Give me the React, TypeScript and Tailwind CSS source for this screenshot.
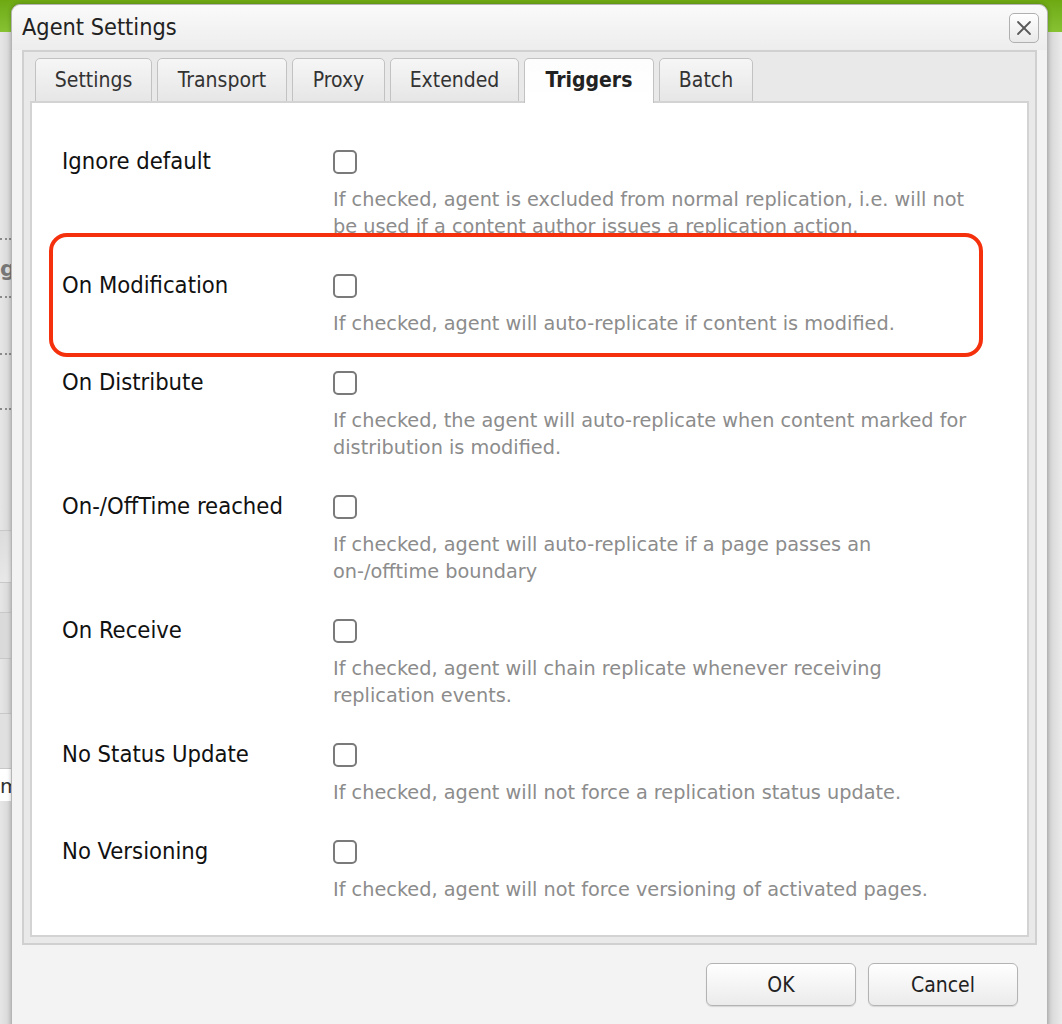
import { X } from 'lucide-react';

const TAHOMA = "font-['DejaVu_Sans_Condensed','DejaVu_Sans',sans-serif] [font-stretch:condensed]";
const VERDANA = "font-['DejaVu_Sans',sans-serif]";

const TABS = [
  { label: 'Settings', w: 'w-[117px]' },
  { label: 'Transport', w: 'w-[130px]' },
  { label: 'Proxy', w: 'w-[93px]' },
  { label: 'Extended', w: 'w-[129px]' },
  { label: 'Triggers', w: 'w-[130px]', active: true },
  { label: 'Batch', w: 'w-[94px]' },
];

const TRIGGERS = [
  {
    label: 'Ignore default',
    lines: [
      'If checked, agent is excluded from normal replication, i.e. will not',
      'be used if a content author issues a replication action.',
    ],
  },
  { label: 'On Modification', lines: ['If checked, agent will auto-replicate if content is modified.'] },
  {
    label: 'On Distribute',
    lines: ['If checked, the agent will auto-replicate when content marked for', 'distribution is modified.'],
  },
  {
    label: 'On-/OffTime reached',
    lines: ['If checked, agent will auto-replicate if a page passes an', 'on-/offtime boundary'],
  },
  {
    label: 'On Receive',
    lines: ['If checked, agent will chain replicate whenever receiving', 'replication events.'],
  },
  { label: 'No Status Update', lines: ['If checked, agent will not force a replication status update.'] },
  { label: 'No Versioning', lines: ['If checked, agent will not force versioning of activated pages.'] },
];

function TriggerRow({ label, lines }: { label: string; lines: string[] }) {
  return (
    <div className="flex pb-[34px]">
      <div className={`w-[271px] shrink-0 -mt-[3px] text-[23.6px] leading-[28px] text-[#111] ${TAHOMA}`}>{label}</div>
      <div className="flex flex-col">
        <div className="h-[24px] w-[24px] rounded-[5px] border-2 border-[#7a7a7a] bg-white" />
        <div className={`mt-[12px] text-[19.3px] leading-[27px] text-[#8c8c8c] ${VERDANA}`}>
          {lines.map(l => (
            <div key={l} className="whitespace-nowrap">
              {l}
            </div>
          ))}
        </div>
      </div>
    </div>
  );
}

function DialogButton({ children }: { children: string }) {
  return (
    <button
      className={`h-[43px] w-[150px] rounded-[6px] border border-[#b3b3b3] bg-gradient-to-b from-white to-[#ebebeb] pt-[3px] text-[21px] text-[#222] shadow-[0_1px_1px_rgba(0,0,0,0.12)] ${TAHOMA}`}
    >
      {children}
    </button>
  );
}

export default function App() {
  return (
    <div className="relative h-[1024px] w-[1062px] overflow-hidden bg-[#e4e4e4]">
      {/* page behind the dialog */}
      <div className="h-[32px] bg-gradient-to-b from-[#6ea912] to-[#86c232]" />
      <div className="flex justify-between">
        <div className="flex w-[11px] flex-col bg-gradient-to-r from-[#e6e6e6] to-[#d6d6d6]">
          <div className="h-[206px]" />
          <div className="h-[2px] border-t-2 border-dotted border-[#8a8a8a]" />
          <div className={`h-[56px] pt-[18px] text-[22px] font-bold leading-[22px] text-[#777] ${VERDANA}`}>g</div>
          <div className="h-[2px] border-t-2 border-dotted border-[#8a8a8a]" />
          <div className="h-[55px]" />
          <div className="h-[2px] border-t-2 border-dotted border-[#8a8a8a]" />
          <div className="h-[53px]" />
          <div className="h-[2px] border-t-2 border-dotted border-[#8a8a8a]" />
          <div className="h-[120px]" />
          <div className="h-[52px] border-t border-[#c8c8c8] bg-gradient-to-b from-[#dcdcdc] to-[#e8e8e8]" />
          <div className="h-[30px] border-t border-[#c8c8c8]" />
          <div className="h-[46px] border-t border-[#c8c8c8] bg-[#dadada]" />
          <div className="h-[55px] border-t border-[#c8c8c8]" />
          <div className="h-[55px] border-t border-[#c8c8c8] bg-[#e0e0e0]" />
          <div className={`border-t border-[#c8c8c8] bg-white pt-[2px] text-[20px] text-[#333] ${VERDANA}`}>m</div>
        </div>
        <div className="h-[992px] w-[15px] bg-gradient-to-r from-[#d2d2d2] to-[#ebebeb]" />
      </div>

      {/* dialog */}
      <div className="absolute left-[11px] top-[4px] flex h-[1040px] w-[1037px] flex-col rounded-t-[9px] border border-[#b5b5b5] bg-[#f3f3f3] shadow-[0_0_4px_rgba(0,0,0,0.25)]">
        <div className="flex h-[45px] items-center justify-between rounded-t-[9px] bg-gradient-to-b from-[#fafafa] to-[#ededed] pl-[10px] pr-[8px]">
          <span className={`text-[23.3px] text-[#222] ${TAHOMA}`}>Agent Settings</span>
          <button className="flex h-[30px] w-[30px] items-center justify-center rounded-[5px] border border-[#b0b0b0] bg-gradient-to-b from-white to-[#e9e9e9]">
            <X className="h-[24px] w-[24px] text-[#5a5a5a]" strokeWidth={1.8} />
          </button>
        </div>

        <div className="mx-[10px] flex flex-col border-2 border-[#d0d0d0] bg-[#e9e9e9] px-[6px] pb-[6px]">
          <div className="flex gap-[5px] pl-[5px] pt-[6px]">
            {TABS.map(t => (
              <div
                key={t.label}
                className={`relative -mb-[2px] flex h-[45px] items-center justify-center rounded-t-[5px] border border-[#c2c2c2] text-[21px] ${TAHOMA} ${t.w} ${
                  t.active
                    ? 'z-10 border-b-0 bg-gradient-to-b from-[#fdfdfd] to-white font-bold text-[#222]'
                    : 'bg-gradient-to-b from-[#f6f6f6] to-[#e6e6e6] text-[#333]'
                }`}
              >
                {t.label}
              </div>
            ))}
          </div>
          <div className="relative h-[836px] border-2 border-[#d3d3d3] bg-white pl-[30px] pt-[47px]">
            {TRIGGERS.map(t => (
              <TriggerRow key={t.label} label={t.label} lines={t.lines} />
            ))}
            <div className="pointer-events-none absolute left-[17px] top-[130px] h-[124px] w-[934px] rounded-[18px] border-4 border-[#f5300d]" />
          </div>
        </div>

        <div className="flex justify-end gap-[12px] pr-[29px] pt-[18px]">
          <DialogButton>OK</DialogButton>
          <DialogButton>Cancel</DialogButton>
        </div>
      </div>
    </div>
  );
}
